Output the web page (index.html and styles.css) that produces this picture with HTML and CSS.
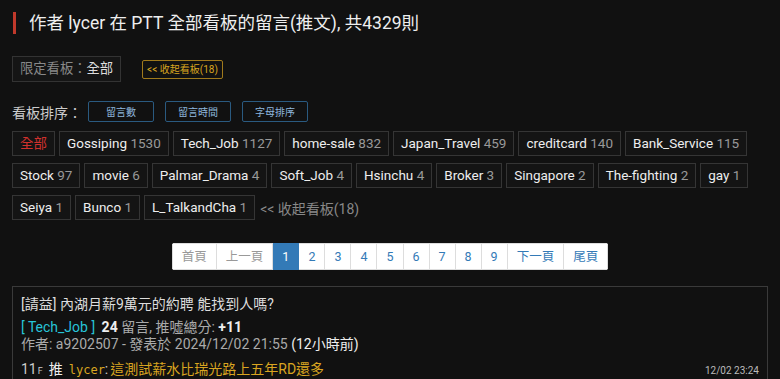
FILE: index.html
```html
<!DOCTYPE html>
<html lang="zh-Hant">
  <head>
    <meta charset="UTF-8">
    <meta name="viewport" content="width=device-width, initial-scale=1.0">
    <title>lycer 的留言</title>
    <link rel="stylesheet" href="styles.css">
  </head>
  <body>
    <h1 class="title">作者 lycer 在 PTT 全部看板的留言(推文), 共4329則</h1>

    <div class="filter-row">
      <span class="filter-box">限定看板：<span class="filter-value">全部</span></span>
      <button class="fold-btn">&lt;&lt; 收起看板(18)</button>
    </div>

    <div class="sort-row">
      <span class="sort-label">看板排序：</span>
      <button class="sort-btn">留言數</button>
      <button class="sort-btn">留言時間</button>
      <button class="sort-btn">字母排序</button>
    </div>

    <div class="boards">
      <span class="board active">全部</span>
      <span class="board">Gossiping <em>1530</em></span>
      <span class="board">Tech_Job <em>1127</em></span>
      <span class="board">home-sale <em>832</em></span>
      <span class="board">Japan_Travel <em>459</em></span>
      <span class="board">creditcard <em>140</em></span>
      <span class="board">Bank_Service <em>115</em></span>
      <span class="board">Stock <em>97</em></span>
      <span class="board">movie <em>6</em></span>
      <span class="board">Palmar_Drama <em>4</em></span>
      <span class="board">Soft_Job <em>4</em></span>
      <span class="board">Hsinchu <em>4</em></span>
      <span class="board">Broker <em>3</em></span>
      <span class="board">Singapore <em>2</em></span>
      <span class="board">The-fighting <em>2</em></span>
      <span class="board">gay <em>1</em></span>
      <span class="board">Seiya <em>1</em></span>
      <span class="board">Bunco <em>1</em></span>
      <span class="board">L_TalkandCha <em>1</em></span>
      <span class="fold-link">&lt;&lt; 收起看板(18)</span>
    </div>

    <div class="pager-wrap">
      <ul class="pager">
        <li class="disabled">首頁</li>
        <li class="disabled">上一頁</li>
        <li class="current">1</li>
        <li>2</li>
        <li>3</li>
        <li>4</li>
        <li>5</li>
        <li>6</li>
        <li>7</li>
        <li>8</li>
        <li>9</li>
        <li>下一頁</li>
        <li>尾頁</li>
      </ul>
    </div>

    <div class="post">
      <div class="post-title">[請益] 內湖月薪9萬元的約聘 能找到人嗎?</div>
      <div class="post-meta">
        <span class="post-board">[ Tech_Job ]</span>
        <b>24</b> 留言, 推噓總分: <b>+11</b>
      </div>
      <div class="post-author">作者: a9202507 - 發表於 2024/12/02 21:55 <b>(12小時前)</b></div>
      <div class="push">
        <span class="floor">11<small>F</small></span>
        <span class="push-tag">推</span>
        <span class="push-user">lycer</span>:
        <span class="push-text">這測試薪水比瑞光路上五年RD還多</span>
        <span class="push-time">12/02 23:24</span>
      </div>
    </div>
  </body>
</html>
```

FILE: styles.css
```css
  body{
    margin: 0;
    padding: 8px 12px;
    background-color: #111111;
    color: #dddddd;
    font-family: Roboto, "Noto Sans CJK TC", sans-serif;
    font-size: 14px;
  }
  button{
    font-family: inherit;
    cursor: pointer;
  }
  .title{
    margin: 4px 0 0 1px;
    padding-left: 13px;
    border-left: 3px solid #c0392b;
    font-size: 17.5px;
    font-weight: normal;
    line-height: 22px;
    color: #eeeeee;
  }
  .filter-row{
    display: flex;
    align-items: center;
    gap: 21px;
    margin-top: 22px;
  }
  .filter-box{
    padding: 3px 7px;
    border: 1px solid #333;
    background-color: #151515;
    color: #888;
    font-size: 13.3px;
    line-height: 18px;
  }
  .filter-value{
    color: #dddddd;
  }
  .fold-btn{
    background: transparent;
    border: 1px solid #a07a1c;
    border-radius: 2px;
    color: #d9a520;
    font-size: 10px;
    padding: 3px 4px;
    line-height: 11px;
  }
  .sort-row{
    display: flex;
    align-items: center;
    margin-top: 19px;
  }
  .sort-label{
    color: #cccccc;
    width: 76px;
  }
  .sort-btn{
    width: 66px;
    height: 21px;
    margin-right: 11px;
    background: #111;
    border: 1px solid #2a5a80;
    border-radius: 2px;
    color: #8fb8de;
    font-size: 10px;
  }
  .boards{
    display: flex;
    flex-wrap: wrap;
    align-items: center;
    gap: 7px 4px;
    margin-top: 9px;
  }
  .board{
    height: 23px;
    line-height: 23px;
    padding: 0 7px;
    border: 1px solid #353535;
    background-color: #141414;
    color: #eeeeee;
    font-size: 13.5px;
  }
  .board em{
    font-style: normal;
    color: #999999;
  }
  .board.active{
    color: #d0312d;
  }
  .fold-link{
    color: #888;
    margin-left: 1px;
  }
  .pager-wrap{
    display: flex;
    justify-content: center;
    margin-top: 23px;
  }
  .pager{
    display: flex;
    list-style: none;
    margin: 0;
    padding: 0;
    background: #fff;
    border-radius: 3px;
    overflow: hidden;
  }
  .pager li{
    height: 25px;
    line-height: 25px;
    padding: 0 9px;
    border: 1px solid #dddddd;
    border-left: none;
    background-color: #fff;
    color: #337ab7;
    font-size: 12.5px;
    text-align: center;
  }
  .pager li:first-child{
    border-left: 1px solid #ddd;
  }
  .pager li.disabled{
    color: #999999;
  }
  .pager li.current{
    background-color: #337ab7;
    border-color: #337ab7;
    color: #fff;
  }
  .post{
    margin-top: 16px;
    padding: 7px 8px 0 8px;
    border: 1px solid #3a3a3a;
    color: #aaaaaa;
  }
  .post-title{
    color: #dddddd;
    line-height: 21px;
  }
  .post-meta{
    margin-top: 3px;
    line-height: 18px;
  }
  .post-meta b, .post-author b{
    color: #eeeeee;
    font-weight: bold;
  }
  .post-author b{
    font-weight: normal;
  }
  .post-board{
    color: #27c4d8;
    margin-right: 3px;
  }
  .post-author{
    line-height: 17px;
  }
  .push{
    display: flex;
    align-items: baseline;
    margin-top: 6px;
    line-height: 20px;
    color: #cccccc;
  }
  .floor small{
    font-size: 9px;
    margin-left: 1px;
  }
  .push-tag{
    margin: 0 6px 0 6px;
    color: #eeeeee;
  }
  .push-user{
    font-family: "DejaVu Sans Mono", monospace;
    font-size: 12px;
    color: #d9a520;
  }
  .push-text{
    color: #d9a520;
    margin-left: 2px;
  }
  .push-time{
    margin-left: auto;
    margin-top: 2px;
    font-size: 10px;
    color: #bbbbbb;
  }
```
